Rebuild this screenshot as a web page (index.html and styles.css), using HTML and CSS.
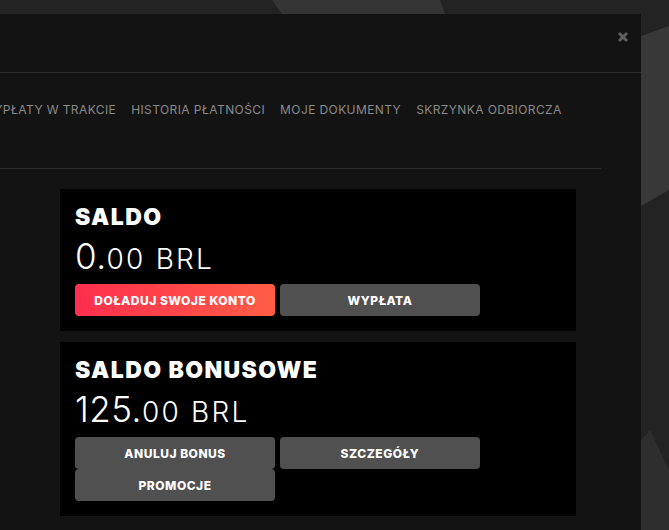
FILE: index.html
```html
<!DOCTYPE html>
<html lang="pl">
<head>
<meta charset="utf-8">
<title>Saldo</title>
<link rel="stylesheet" href="styles.css">
</head>
<body>
<svg class="backdrop" width="669" height="530" viewBox="0 0 669 530" aria-hidden="true">
  <rect width="669" height="530" fill="#232323"/>
  <polygon points="272,0 440,0 445,14 282,14" fill="#353535"/>
  <polygon points="641,36 669,26 669,190 641,206" fill="#383838"/>
  <polygon points="641,440 650,430 669,470 669,530 641,530" fill="#2e2e2e"/>
</svg>
<div class="modal">
  <div class="modal-header">
    <button class="close" aria-label="Zamknij">
      <svg width="12" height="12" viewBox="0 0 12 12"><path d="M2 2 L10 10 M10 2 L2 10" stroke="#5f5f5f" stroke-width="3" stroke-linecap="butt"/></svg>
    </button>
  </div>
  <nav class="tabs">
    <a class="tab">WYPŁATY W TRAKCIE</a>
    <a class="tab">HISTORIA PŁATNOŚCI</a>
    <a class="tab">MOJE DOKUMENTY</a>
    <a class="tab">SKRZYNKA ODBIORCZA</a>
  </nav>
  <div class="content">
    <section class="card">
      <h2 class="card-title">SALDO</h2>
      <div class="amount"><span class="big">0.</span><span class="small">00 BRL</span></div>
      <div class="actions">
        <button class="btn btn-primary">DOŁADUJ SWOJE KONTO</button>
        <button class="btn">WYPŁATA</button>
      </div>
    </section>
    <section class="card">
      <h2 class="card-title">SALDO BONUSOWE</h2>
      <div class="amount"><span class="big">125.</span><span class="small">00 BRL</span></div>
      <div class="actions">
        <button class="btn">ANULUJ BONUS</button>
        <button class="btn">SZCZEGÓŁY</button>
        <button class="btn">PROMOCJE</button>
      </div>
    </section>
  </div>
</div>
</body>
</html>
```
FILE: styles.css
```css
* { box-sizing: border-box; }
html, body { margin: 0; padding: 0; }
body {
  width: 669px;
  height: 530px;
  overflow: hidden;
  background: #232323;
  font-family: Inter, "Open Sans", sans-serif;
  position: relative;
}
.backdrop {
  position: absolute;
  left: 0;
  top: 0;
  z-index: 0;
}
.modal {
  position: relative;
  z-index: 1;
  margin-top: 14px;
  width: 641px;
  height: 530px;
  background: #131313;
  overflow: hidden;
}
.modal-header {
  height: 59px;
  border-bottom: 1px solid #2b2b2b;
  display: flex;
  justify-content: flex-end;
  align-items: flex-start;
  padding: 17px 12px 0 0;
}
.close {
  background: none;
  border: 0;
  padding: 0;
  width: 12px;
  height: 12px;
  display: flex;
  cursor: pointer;
}
.tabs {
  width: 601px;
  height: 96px;
  border-bottom: 1px solid #2b2b2b;
  display: flex;
  align-items: flex-start;
  gap: 15px;
  padding-top: 29px;
  white-space: nowrap;
}
.tabs .tab:first-child { margin-left: -18px; }
.tab {
  color: #8a8a8a;
  font-size: 12px;
  font-weight: 400;
  letter-spacing: 0.4px;
}
.content {
  padding: 20px 0 0 60px;
  display: flex;
  flex-direction: column;
  gap: 11px;
}
.card {
  width: 516px;
  background: #000;
  padding: 13px 15px 15px;
}
.card-title {
  margin: 0;
  color: #fff;
  font-size: 23px;
  font-weight: 900;
  line-height: 30px;
  letter-spacing: 1.4px;
}
.amount {
  color: #fff;
  font-weight: 300;
  height: 52px;
  line-height: 48px;
  white-space: nowrap;
}
.amount .big { font-size: 35px; letter-spacing: 0.5px; }
.amount .small { font-size: 28px; letter-spacing: 2.2px; }
.actions {
  display: flex;
  flex-wrap: wrap;
  column-gap: 5px;
  row-gap: 0;
}
.btn {
  width: 200px;
  height: 32px;
  border: 0;
  border-radius: 4px;
  background: #505050;
  color: #fff;
  font-family: Inter, sans-serif;
  font-size: 12px;
  font-weight: 800;
  letter-spacing: 0.5px;
  padding: 0;
  cursor: pointer;
}
.btn-primary {
  background: linear-gradient(90deg, #ff2e4e 0%, #ff5d46 100%);
}
```
